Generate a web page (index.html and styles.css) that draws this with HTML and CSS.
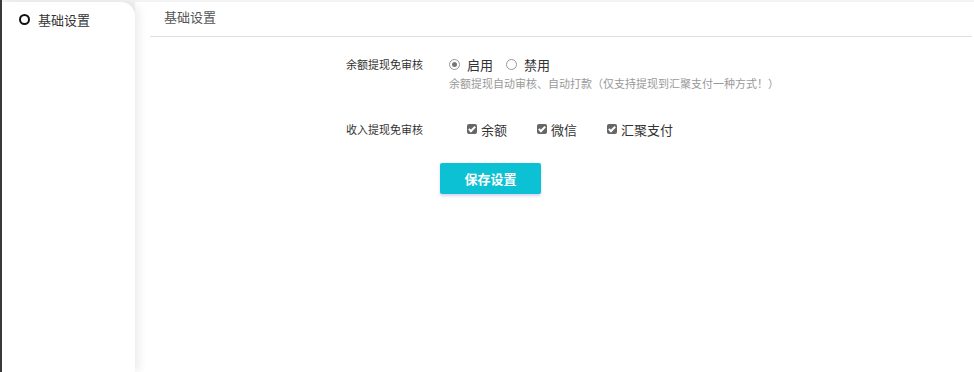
FILE: index.html
```html
<!DOCTYPE html>
<html lang="zh-CN">
<head>
  <meta charset="UTF-8" />
  <title>基础设置</title>
  <link rel="stylesheet" href="styles.css">
</head>
<body>
  <div class="page">
    <div class="sidebar">
      <div class="menu-item"><span class="dot"></span>基础设置</div>
    </div>

    <div class="main">
      <div class="main-title">基础设置</div>

      <form class="form">
        <div class="form-row">
          <label class="form-label">余额提现免审核</label>
          <div class="form-field">
            <div class="options">
              <span class="radio checked"></span><span class="opt-text">启用</span>
              <span class="radio"></span><span class="opt-text">禁用</span>
            </div>
            <div class="help">余额提现自动审核、自动打款（仅支持提现到汇聚支付一种方式！）</div>
          </div>
        </div>

        <div class="form-row row-check">
          <label class="form-label">收入提现免审核</label>
          <div class="form-field">
            <div class="options checks">
              <span class="check"></span><span class="opt-text">余额</span>
              <span class="check"></span><span class="opt-text">微信</span>
              <span class="check"></span><span class="opt-text">汇聚支付</span>
            </div>
          </div>
        </div>

        <button type="button" class="btn-save">保存设置</button>
      </form>
    </div>
  </div>
</body>
</html>
```

FILE: styles.css
```css
body {
  margin: 0;
  background: #f3f3f3;
  font-family: "Microsoft YaHei", "Noto Sans CJK SC", sans-serif;
  color: #333;
}
.page {
  display: flex;
  height: 370px;
  padding-top: 2px;
  border-left: 2px solid #3a3a3a;
}
.sidebar {
  width: 133px;
  background: #fff;
  border-top-right-radius: 14px;
  box-shadow: 4px 0 10px rgba(0,0,0,0.08);
  position: relative;
  z-index: 1;
}
.menu-item {
  display: flex;
  align-items: center;
  height: 34px;
  padding-left: 17px;
  font-size: 13px;
  color: #333;
}
.dot {
  width: 7px;
  height: 7px;
  border: 2px solid #111;
  border-radius: 50%;
  margin-right: 8px;
}
.main {
  flex: 1;
  background: #fff;
  padding-left: 15px;
  padding-right: 2px;
}
.main-title {
  height: 34px;
  line-height: 30px;
  padding-left: 14px;
  font-size: 13px;
  color: #555;
  border-bottom: 1px solid #e0e0e0;
}
.form {
  padding-left: 196px;
  padding-top: 17px;
}
.form-row {
  display: flex;
}
.form-label {
  width: 103px;
  font-size: 11px;
  line-height: 20px;
  color: #333;
}
.options {
  display: flex;
  align-items: center;
  height: 20px;
  font-size: 13px;
}
.opt-text {
  margin-right: 13px;
}
.radio {
  width: 9px;
  height: 9px;
  border: 1px solid #999;
  border-radius: 50%;
  margin-right: 7px;
  position: relative;
}
.radio.checked::after {
  content: "";
  position: absolute;
  left: 2px;
  top: 2px;
  width: 5px;
  height: 5px;
  border-radius: 50%;
  background: #777;
}
.help {
  font-size: 11px;
  color: #999;
  line-height: 18px;
}
.row-check {
  margin-top: 27px;
}
.checks {
  padding-left: 18px;
}
.checks .opt-text {
  margin-right: 30px;
}
.check {
  width: 10px;
  height: 10px;
  background: #666;
  border-radius: 2px;
  margin-right: 4px;
  position: relative;
}
.check::after {
  content: "";
  position: absolute;
  left: 3px;
  top: 1px;
  width: 2px;
  height: 5px;
  border: solid #fff;
  border-width: 0 2px 2px 0;
  transform: rotate(45deg);
}
.btn-save {
  margin: 24px 0 0 94px;
  width: 101px;
  height: 31px;
  background: #0cc1d3;
  color: #fff;
  border: none;
  border-radius: 2px;
  font-family: inherit;
  font-size: 13px;
  font-weight: bold;
  box-shadow: 0 2px 3px rgba(90,80,200,0.25);
  cursor: pointer;
}
```
